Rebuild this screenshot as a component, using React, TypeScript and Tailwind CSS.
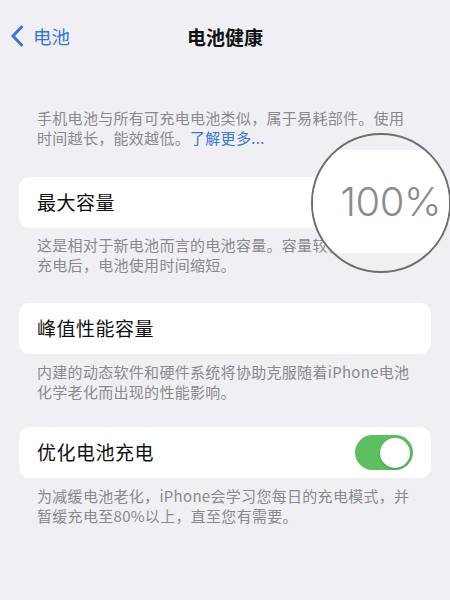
import React from "react";

const font = { fontFamily: '"Noto Sans CJK SC", "Noto Sans", sans-serif' };

export default function App() {
  return (
    <div className="relative w-[450px] h-[600px] overflow-hidden bg-[#efeff4]" style={font}>
      {/* Nav */}
      <div className="relative h-[72px] flex items-center">
        <div className="flex items-center pl-[10px] gap-[9px] text-[#3478d8]">
          <svg width="14" height="22" viewBox="0 0 14 22" fill="none">
            <path d="M11.5 2 L3 11 L11.5 20" stroke="#3478d8" strokeWidth="3" strokeLinecap="round" strokeLinejoin="round" />
          </svg>
          <span className="text-[18.5px] leading-none">电池</span>
        </div>
        <div className="absolute left-0 right-0 flex justify-center pointer-events-none">
          <span className="text-[19px] font-bold text-[#111] leading-none">电池健康</span>
        </div>
      </div>

      <div className="px-[19px]">
        {/* Intro */}
        <div className="mt-[36px] px-[18px] text-[15px] leading-[20px] text-[#8a8a8e] tracking-[0.3px] whitespace-nowrap">
          <div>手机电池与所有可充电电池类似，属于易耗部件。使用</div>
          <div>
            时间越长，能效越低。<span className="text-[#3478d8]">了解更多...</span>
          </div>
        </div>

        {/* Card 1 */}
        <div className="mt-[29px] h-[51px] rounded-[11px] bg-white flex items-center px-[18px]">
          <span className="text-[19px] tracking-[0.5px] text-[#111]">最大容量</span>
        </div>
        <div className="mt-[7px] px-[18px] text-[15px] leading-[20px] text-[#8a8a8e] tracking-[0.3px] whitespace-nowrap">
          <div>这是相对于新电池而言的电池容量。容量较低可能导致</div>
          <div>充电后，电池使用时间缩短。</div>
        </div>

        {/* Card 2 */}
        <div className="mt-[28px] h-[51px] rounded-[11px] bg-white flex items-center px-[18px]">
          <span className="text-[19px] tracking-[0.5px] text-[#111]">峰值性能容量</span>
        </div>
        <div className="mt-[8px] px-[18px] text-[15px] leading-[20px] text-[#8a8a8e] tracking-[0.3px] whitespace-nowrap">
          <div>内建的动态软件和硬件系统将协助克服随着iPhone电池</div>
          <div>化学老化而出现的性能影响。</div>
        </div>

        {/* Card 3 */}
        <div className="mt-[25px] h-[51px] rounded-[11px] bg-white flex items-center justify-between pl-[18px] pr-[18px]">
          <span className="text-[19px] tracking-[0.5px] text-[#111]">优化电池充电</span>
          <div className="w-[58px] h-[35px] rounded-full bg-[#5cbf60] flex items-center justify-end pr-[3px]">
            <div className="w-[30px] h-[30px] rounded-full bg-white shadow-[0_1px_3px_rgba(0,0,0,0.2)]" />
          </div>
        </div>
        <div className="mt-[8px] px-[18px] text-[15px] leading-[20px] text-[#8a8a8e] tracking-[0.3px] whitespace-nowrap">
          <div>为减缓电池老化，iPhone会学习您每日的充电模式，并</div>
          <div>暂缓充电至80%以上，直至您有需要。</div>
        </div>
      </div>

      {/* Magnifier */}
      <div className="absolute left-[311px] top-[133px] w-[140px] h-[140px] rounded-full border-[2px] border-[#6e6e6e] overflow-hidden bg-[#efeff4] flex flex-col">
        <div className="h-[15px]" />
        <div className="h-[103px] bg-white flex items-center justify-end pr-[8px]">
          <span
            className="text-[40px] font-light text-[#8c8c8c] leading-none tracking-[-0.5px]"
            style={{ fontFamily: '"Inter", "Liberation Sans", sans-serif' }}
          >
            100%
          </span>
        </div>
      </div>
    </div>
  );
}
